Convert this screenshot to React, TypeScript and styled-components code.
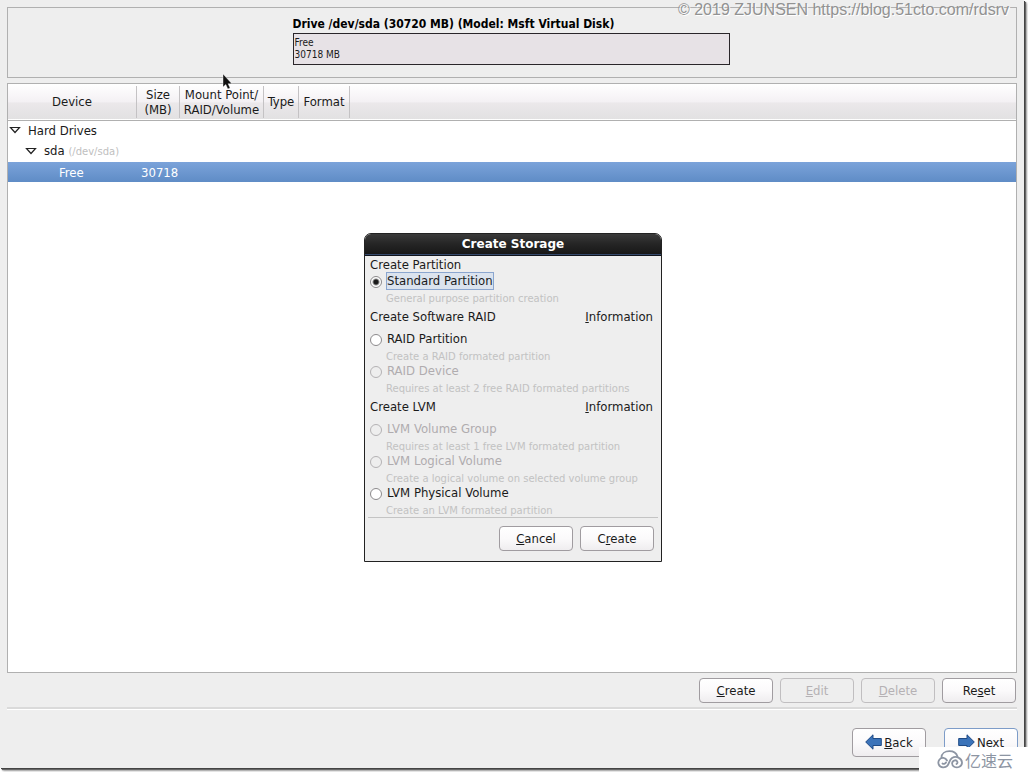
import React from 'react';
import styled, { createGlobalStyle, css } from 'styled-components';

const GlobalStyle = createGlobalStyle`
  *, *::before, *::after { box-sizing: border-box; }
  body {
    margin: 0;
    background: #eee;
    color: #1a1a1a;
    font-family: 'DejaVu Sans Condensed', 'DejaVu Sans', sans-serif;
    font-size: 13px;
    line-height: 15px;
  }
  button, input { font: inherit; color: inherit; }
  h1, h2, p { margin: 0; font: inherit; }
`;

const Screen = styled.div`
  position: relative;
  min-height: 100vh;
  padding: 0 4px 4px 0;
  display: flex;
  background: #fff;
`;

const Installer = styled.main`
  flex: 1;
  min-width: 0;
  display: flex;
  flex-direction: column;
  padding: 7px 7px 11px;
  background: #eee;
  box-shadow: 1px 1px 0 #444, 2px 2px 1px #666, 3px 3px 2px #aaa;
`;

const DrivePanel = styled.section`
  display: flex;
  flex-direction: column;
  align-items: center;
  padding: 9px 2px 12px 0;
  border: 1px solid #b0b0b0;
`;

const Drive = styled.figure`
  width: 437px;
  max-width: 100%;
  margin: 0;
`;

const DriveTitle = styled.figcaption`
  padding-bottom: 1px;
  font-weight: bold;
  font-size: 12px;
  line-height: 15px;
  color: #000;
`;

const DriveBar = styled.div`
  padding: 3px 1px;
  border: 1px solid #2a262a;
  background: #e7e2e6;
  font-size: 10px;
  line-height: 12px;
`;

const DeviceList = styled.section`
  flex: 1;
  margin-top: 5px;
  border: 1px solid #b0b0b0;
  background: #fff;
`;

const DeviceTable = styled.table`
  width: 100%;
  table-layout: fixed;
  border-collapse: collapse;
`;

const Col = styled.col<{ $w?: number }>`
  width: ${p => (p.$w ? `${p.$w}px` : 'auto')};
`;

const HeadRow = styled.tr`
  height: 36px;
  background: linear-gradient(#fff, #f4f1f4 50%, #ebe8ea 55%, #e2e1e2);
  border-bottom: 1px solid #b0b0b0;
`;

const HeadCell = styled.th`
  padding: 0;
  font-weight: normal;
`;

const HeadLabel = styled.div`
  display: flex;
  align-items: center;
  justify-content: center;
  height: 32px;
  border-right: 1px solid #c4c2c4;
`;

const Row = styled.tr<{ $selected?: boolean }>`
  height: 21px;
  ${p => p.$selected && css`
    height: 20px;
    color: #fff;
    background: linear-gradient(#7ba3da, #5f8cc6);
  `}
`;

const Cell = styled.td<{ $indent?: number }>`
  padding: 0 0 0 ${p => p.$indent ?? 4}px;
  white-space: nowrap;
`;

const TreeLabel = styled.span`
  display: flex;
  align-items: center;
  gap: 7px;
  padding-bottom: 1px;
`;

const Muted = styled.small`
  font-family: 'DejaVu Sans', sans-serif;
  font-size: 10px;
  color: #c0c0c0;
`;

const ButtonRow = styled.div<{ $gap: number }>`
  display: flex;
  justify-content: flex-end;
  gap: ${p => p.$gap}px;
`;

const ListActions = styled(ButtonRow)`
  padding: 5px 1px 4px 0;
`;

const Divider = styled.hr`
  width: 100%;
  height: 3px;
  margin: 0;
  border: 0;
  border-top: 2px solid #dadada;
  background: #fff;
`;

const PushButton = styled.button<{ $tall?: boolean; $focus?: boolean }>`
  display: flex;
  align-items: center;
  justify-content: center;
  gap: 2px;
  width: 74px;
  height: ${p => (p.$tall ? 29 : 25)}px;
  padding: 0 0 1px;
  border: 1px solid ${p => (p.$focus ? '#7d9cc8' : '#a09ca0')};
  border-radius: 4px;
  background: linear-gradient(#fff, #fbfafb 50%, #efedef);
  color: #1a1a1a;
  &:disabled {
    border-color: #c0bec0;
    background: #eee;
    color: #b5b1b4;
  }
`;

const Navigation = styled.nav`
  margin: 18px -1px 0 0;
`;

const Dialog = styled.form`
  position: absolute;
  top: 233px;
  left: 0;
  right: 2px;
  width: 298px;
  margin: 0 auto;
  border: 1px solid #222;
  border-radius: 7px 7px 0 0;
  background: #eee;
  overflow: hidden;
`;

const DialogTitle = styled.h1`
  height: 22px;
  border-bottom: 1px solid #10141c;
  background: linear-gradient(#3a3a3a, #262626 45%, #161616);
  box-shadow: inset 0 -1px 0 #35496b;
  color: #fff;
  font: bold 12px/21px 'DejaVu Sans', sans-serif;
  text-align: center;
`;

const DialogBody = styled.div`
  padding: 0 8px 1px 5px;
`;

const GroupHead = styled.div<{ $tall?: boolean }>`
  display: flex;
  align-items: center;
  justify-content: space-between;
  height: ${p => (p.$tall ? 26 : 16)}px;
  padding-bottom: ${p => (p.$tall ? 2 : 0)}px;
`;

const InfoButton = styled.button`
  padding: 0;
  border: 0;
  background: none;
`;

const Option = styled.label<{ $disabled?: boolean }>`
  display: flex;
  align-items: center;
  gap: 4px;
  height: 22px;
  padding-bottom: 4px;
  color: ${p => (p.$disabled ? '#b0acaf' : '#1a1a1a')};
`;

const Radio = styled.input`
  appearance: none;
  width: 12px;
  height: 12px;
  margin: 1px 0 0;
  border: 1px solid #8c8a8c;
  border-radius: 50%;
  background: #fff;
  &:checked {
    background: radial-gradient(circle, #1a1a1a 0 2px, #fff 4px);
  }
  &:disabled {
    border-color: #b4b2b4;
    background: #eee;
  }
`;

const OptionText = styled.span<{ $focus?: boolean }>`
  border: 1px solid transparent;
  line-height: 16px;
  ${p => p.$focus && css`
    border-color: #8ba6cf;
    background: #dbe3ee;
  `}
`;

const Hint = styled.p`
  height: 10px;
  padding-left: 16px;
  font: 10px/10px 'DejaVu Sans', sans-serif;
  color: #c2c2c2;
  white-space: nowrap;
`;

const DialogButtons = styled(ButtonRow)`
  margin: 0 3px;
  padding: 8px 4px 10px;
  border-top: 1px solid #c4c4c4;
`;

const Pointer = styled.svg`
  position: absolute;
  left: 222px;
  top: 73px;
`;

const Credit = styled.p`
  position: absolute;
  top: 0;
  right: 19px;
  color: #929292;
  font: 16px/20px 'Liberation Sans', sans-serif;
  text-shadow: 1px 1px 0 #fff;
`;

const Brand = styled.div`
  position: absolute;
  right: 0;
  bottom: 0;
  display: flex;
  align-items: center;
  gap: 1px;
  width: 109px;
  height: 25px;
  padding-left: 18px;
  background: #fff;
  color: #8d95a3;
  font: 16px/24px 'Noto Sans CJK SC', sans-serif;
`;

const Expander = () => (
  <svg width="12" height="8" viewBox="0 0 12 8" aria-hidden="true">
    <path d="M1.5 1.5h9L6 6.5z" fill="#fff" stroke="#222" strokeWidth="1.2" />
  </svg>
);

const Arrow = ({ flip }: { flip?: boolean }) => (
  <svg width="17" height="16" viewBox="0 0 17 16" aria-hidden="true">
    <path
      d="M.7 8L8 .8v3.7h8.3v7H8v3.7z"
      fill="#3b73b9"
      stroke="#1f4a85"
      transform={flip ? 'matrix(-1 0 0 1 17 0)' : undefined}
    />
  </svg>
);

const columns = ['Device', 'Size\n(MB)', 'Mount Point/\nRAID/Volume', 'Type', 'Format'];
const widths = [129, 43, 84, 35, 51];

type Choice = { label: string; hint: string; disabled?: boolean };
type Group = { title: string; info?: boolean; choices: Choice[] };

const groups: Group[] = [
  {
    title: 'Create Partition',
    choices: [{ label: 'Standard Partition', hint: 'General purpose partition creation' }],
  },
  {
    title: 'Create Software RAID',
    info: true,
    choices: [
      { label: 'RAID Partition', hint: 'Create a RAID formated partition' },
      { label: 'RAID Device', hint: 'Requires at least 2 free RAID formated partitions', disabled: true },
    ],
  },
  {
    title: 'Create LVM',
    info: true,
    choices: [
      { label: 'LVM Volume Group', hint: 'Requires at least 1 free LVM formated partition', disabled: true },
      { label: 'LVM Logical Volume', hint: 'Create a logical volume on selected volume group', disabled: true },
      { label: 'LVM Physical Volume', hint: 'Create an LVM formated partition' },
    ],
  },
];

export default function App() {
  const [choice, setChoice] = React.useState('Standard Partition');
  return (
    <Screen>
      <GlobalStyle />
      <Installer>
        <DrivePanel>
          <Drive>
            <DriveTitle>Drive /dev/sda (30720 MB) (Model: Msft Virtual Disk)</DriveTitle>
            <DriveBar>Free<br />30718 MB</DriveBar>
          </Drive>
        </DrivePanel>
        <DeviceList>
          <DeviceTable>
            <colgroup>
              {widths.map((w, i) => <Col key={i} $w={w} />)}
              <Col />
            </colgroup>
            <thead>
              <HeadRow>
                {columns.map(c => (
                  <HeadCell key={c} scope="col">
                    <HeadLabel>
                      <span>{c.split('\n').map((line, i) => <React.Fragment key={line}>{i > 0 && <br />}{line}</React.Fragment>)}</span>
                    </HeadLabel>
                  </HeadCell>
                ))}
                <td />
              </HeadRow>
            </thead>
            <tbody>
              <Row>
                <Cell colSpan={6} $indent={1}><TreeLabel><Expander />Hard Drives</TreeLabel></Cell>
              </Row>
              <Row>
                <Cell colSpan={6} $indent={17}>
                  <TreeLabel><Expander /><span>sda <Muted>(/dev/sda)</Muted></span></TreeLabel>
                </Cell>
              </Row>
              <Row $selected>
                <Cell $indent={51}>Free</Cell>
                <Cell>30718</Cell>
                <Cell colSpan={4} />
              </Row>
            </tbody>
          </DeviceTable>
        </DeviceList>
        <ListActions $gap={7}>
          <PushButton type="button"><span><u>C</u>reate</span></PushButton>
          <PushButton type="button" disabled><span><u>E</u>dit</span></PushButton>
          <PushButton type="button" disabled><span><u>D</u>elete</span></PushButton>
          <PushButton type="button"><span>Re<u>s</u>et</span></PushButton>
        </ListActions>
        <Divider />
        <Navigation>
          <ButtonRow $gap={18}>
            <PushButton type="button" $tall><Arrow /><span><u>B</u>ack</span></PushButton>
            <PushButton type="button" $tall $focus><Arrow flip /><span><u>N</u>ext</span></PushButton>
          </ButtonRow>
        </Navigation>
      </Installer>

      <Dialog role="dialog" aria-labelledby="dialog-title" onSubmit={e => e.preventDefault()}>
        <DialogTitle id="dialog-title">Create Storage</DialogTitle>
        <DialogBody>
          {groups.map(g => (
            <div key={g.title} role="group" aria-label={g.title}>
              <GroupHead $tall={g.info}>
                <h2>{g.title}</h2>
                {g.info && <InfoButton type="button"><u>I</u>nformation</InfoButton>}
              </GroupHead>
              {g.choices.map(c => (
                <React.Fragment key={c.label}>
                  <Option $disabled={c.disabled}>
                    <Radio
                      type="radio"
                      name="storage"
                      disabled={c.disabled}
                      checked={choice === c.label}
                      onChange={() => setChoice(c.label)}
                    />
                    <OptionText $focus={choice === c.label}>{c.label}</OptionText>
                  </Option>
                  <Hint>{c.hint}</Hint>
                </React.Fragment>
              ))}
            </div>
          ))}
        </DialogBody>
        <DialogButtons $gap={7}>
          <PushButton type="button"><span><u>C</u>ancel</span></PushButton>
          <PushButton type="submit"><span>C<u>r</u>eate</span></PushButton>
        </DialogButtons>
      </Dialog>

      <Pointer width="11" height="18" viewBox="0 0 11 18" aria-hidden="true">
        <path d="M1 1v13l2.800-2.500 2 4.500 2.300-1-2-4.300h3.800z" fill="#111" stroke="#fff" strokeWidth=".4" />
      </Pointer>
      <Credit>© 2019 ZJUNSEN https://blog.51cto.com/rdsrv</Credit>
      <Brand>
        <svg width="27" height="19" viewBox="0 0 27 19" fill="none" stroke="#8d95a3" strokeWidth="1.8" strokeLinecap="round" aria-hidden="true">
          <path d="M4.500 7.500C4.500 3.500 8 1.200 12.500 1.200c4.300 0 7 2.200 8 5.300" />
          <path d="M10 10.500C8.500 7.500 4.500 7 2.500 9.500.2 12.500 1.500 17 6 17.300c7 .4 5-6.800 9-9.300 4-2.400 9.700-.3 10 4.500.2 4-4.500 6-7.800 4.300-3-1.600-2.700-6 .6-6.500 2.400-.3 3.600 2.400 1.700 3.700" />
          <path d="M5.500 13.500c1 .8 2.800.3 3.500-1" />
        </svg>
        亿速云
      </Brand>
    </Screen>
  );
}
